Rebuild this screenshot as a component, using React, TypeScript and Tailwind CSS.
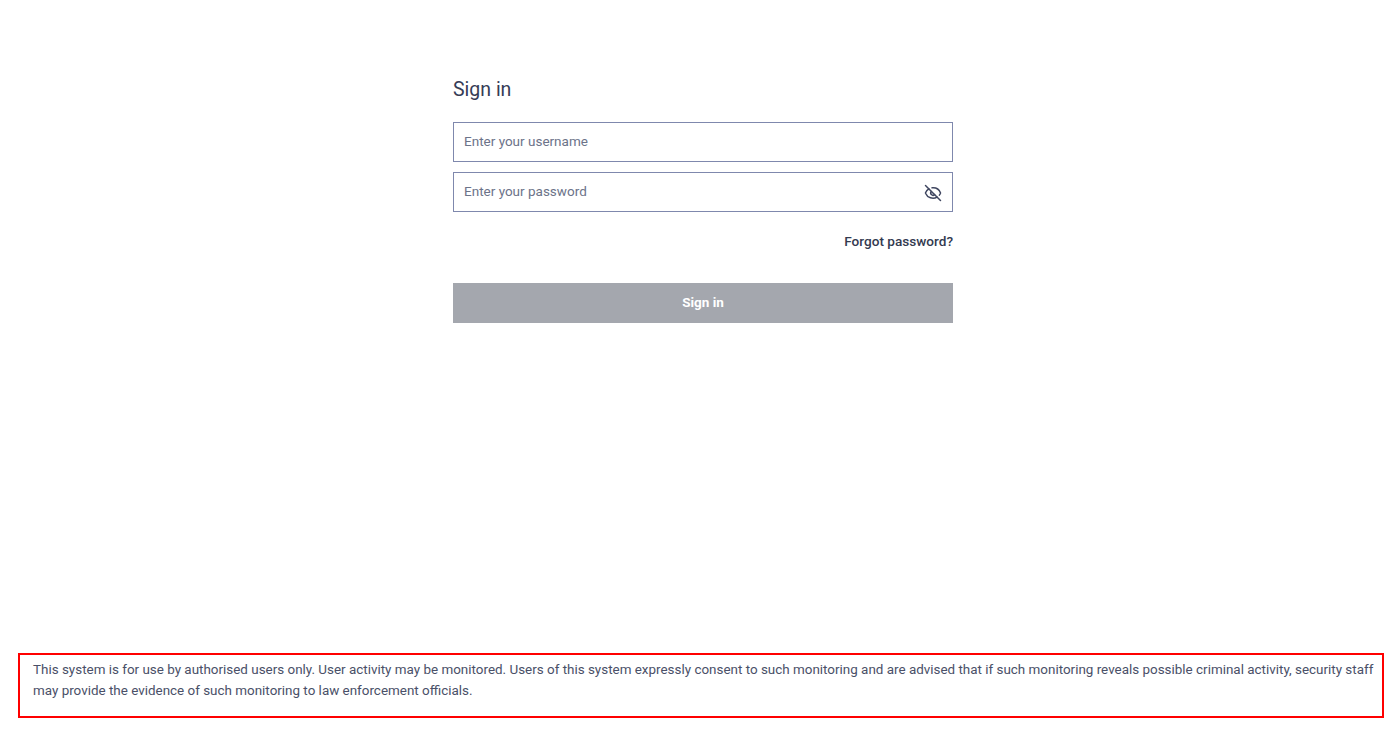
import { EyeOff } from "lucide-react";

const font = "font-['Roboto',sans-serif]";

export default function App() {
  return (
    <div className={`h-[731px] w-full overflow-hidden bg-white flex flex-col ${font}`}>
      <main className="flex-1 w-[500px] ml-[453px] pt-[78px]">
        <h1 className="text-[19.5px] leading-[24px] font-normal text-[#363c56]">Sign in</h1>

        <div className="mt-[20px] h-10 border border-[#7f88ad] flex items-center px-[10px]">
          <span className="text-[13.5px] leading-[18px] pb-[2px] text-[#6c7389]">Enter your username</span>
        </div>

        <div className="mt-[10px] h-10 border border-[#7f88ad] flex items-center justify-between pl-[10px] pr-[10px]">
          <span className="text-[13.5px] leading-[18px] pb-[2px] text-[#6c7389]">Enter your password</span>
          <EyeOff size={18} strokeWidth={2} className="text-[#3f4660] mt-[1px]" />
        </div>

        <div className="mt-[19px] flex justify-end">
          <a className="text-[13.6px] leading-5 font-medium text-[#333a50]">Forgot password?</a>
        </div>

        <button className="mt-[32px] w-full h-10 bg-[#a4a7ae] text-white text-[13.5px] leading-[18px] pb-[2px] font-bold">Sign in</button>
      </main>

      <footer className="ml-[18px] mr-[14px] mb-[13px] h-[65px] border-2 border-[#ff0000] pl-[13px] pr-2 pt-[4px]">
        <p className="text-[13.43px] leading-[21px] text-[#4a5068]">
          This system is for use by authorised users only. User activity may be monitored. Users of this system expressly consent to such monitoring and are advised that if such monitoring reveals possible criminal activity, security staff may provide the evidence of such monitoring to law enforcement officials.
        </p>
      </footer>
    </div>
  );
}
